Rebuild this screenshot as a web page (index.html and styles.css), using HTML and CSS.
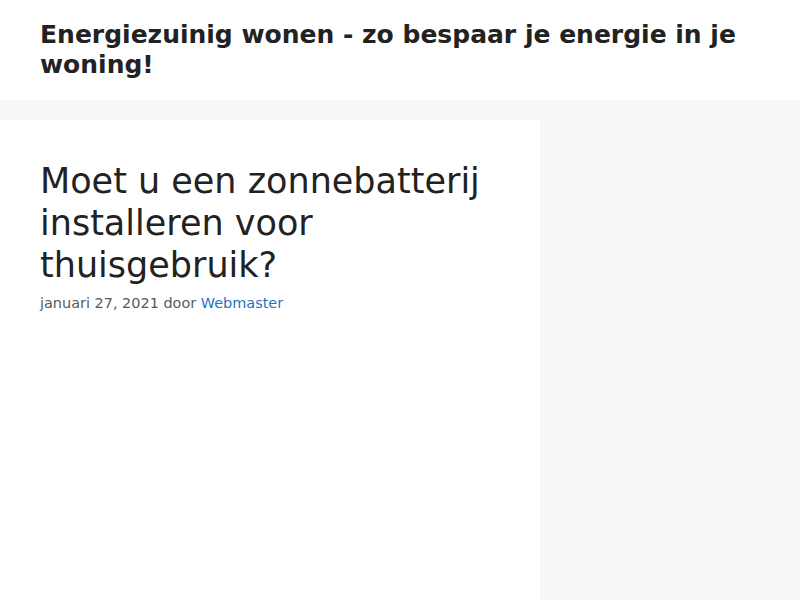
FILE: index.html
```html
<!DOCTYPE html>
<html lang="nl">
<head>
<meta charset="utf-8">
<title>Moet u een zonnebatterij installeren voor thuisgebruik?</title>
<link rel="stylesheet" href="styles.css">
</head>
<body>
<header class="site-header">
  <p class="site-title">Energiezuinig wonen - zo bespaar je energie in je woning!</p>
</header>
<div class="site-content">
  <main class="content-area">
    <article class="post">
      <h1 class="entry-title">Moet u een zonnebatterij installeren voor thuisgebruik?</h1>
      <div class="entry-meta">januari 27, 2021 door <a class="author" href="#">Webmaster</a></div>
    </article>
  </main>
  <aside class="sidebar"></aside>
</div>
</body>
</html>
```
FILE: styles.css
```css
html, body {
  margin: 0;
  padding: 0;
}
body {
  background: #f7f8f9;
  color: #222222;
  font-family: "DejaVu Sans", sans-serif;
  font-size: 17px;
  line-height: 1.5;
}
.site-header {
  background: #ffffff;
  padding: 20px 40px;
}
.site-title {
  margin: 0;
  font-size: 25px;
  font-weight: 700;
  line-height: 1.2;
  color: #222222;
}
.site-content {
  display: flex;
  margin-top: 20px;
}
.content-area {
  width: 540px;
  flex: none;
  background: #ffffff;
  box-sizing: border-box;
  padding: 40px;
  min-height: 600px;
}
.sidebar {
  flex: 1;
}
.entry-title {
  margin: 0;
  font-size: 35px;
  font-weight: 400;
  line-height: 1.2;
  color: #222222;
}
.entry-meta {
  margin-top: 0.5em;
  font-size: 14.45px;
  line-height: 1.5;
  color: #595959;
}
.author {
  color: #1e73be;
  text-decoration: none;
}
```
